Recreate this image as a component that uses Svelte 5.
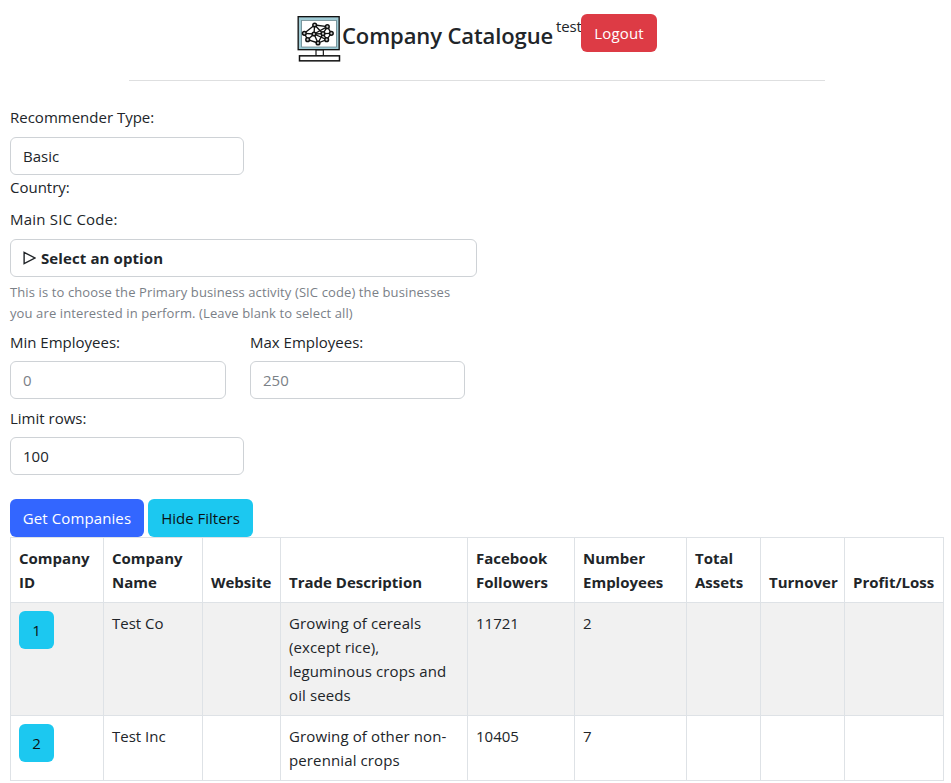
<script>
  const columns = [
    { label: 'Company ID', width: 93 },
    { label: 'Company Name', width: 99 },
    { label: 'Website', width: 78 },
    { label: 'Trade Description', width: 187 },
    { label: 'Facebook Followers', width: 107 },
    { label: 'Number Employees', width: 112 },
    { label: 'Total Assets', width: 74 },
    { label: 'Turnover', width: 84 },
    { label: 'Profit/Loss', width: 99 }
  ];
  const companies = [
    { id: 1, name: 'Test Co', trade: ['Growing of cereals', '(except rice),', 'leguminous crops and', 'oil seeds'], followers: 11721, employees: 2 },
    { id: 2, name: 'Test Inc', trade: ['Growing of other non-', 'perennial crops'], followers: 10405, employees: 7 }
  ];
  const nodes = [[89, 60], [127, 65], [58, 85], [87, 87], [114, 86], [139, 85], [68, 104], [99, 114], [125, 104]];
  const edges = [[0, 1], [0, 2], [0, 3], [0, 4], [1, 4], [1, 5], [2, 3], [2, 6], [3, 6], [3, 4], [3, 7], [4, 5], [4, 7], [4, 8], [5, 8], [6, 7], [7, 8], [3, 8], [1, 3]];
</script>

<header>
  <svg class="logo" viewBox="36 30 132 144" aria-hidden="true">
    <rect x="39.500" y="35" width="123" height="99" fill="#9fcbd5" stroke="#111" stroke-width="4" />
    <rect x="50" y="46" width="104" height="80" fill="#fff" stroke="#55747c" stroke-width="2" />
    <rect x="93" y="135" width="22" height="17" fill="#fff" stroke="#111" stroke-width="3.500" />
    <rect x="43.500" y="152.500" width="120" height="15" fill="#fff" stroke="#111" stroke-width="4.500" />
    {#each edges as [a, b]}
      <line x1={nodes[a][0]} y1={nodes[a][1]} x2={nodes[b][0]} y2={nodes[b][1]} stroke="#111" stroke-width="4" />
    {/each}
    {#each nodes as [cx, cy]}
      <circle {cx} {cy} r="5.500" fill="#ccc" stroke="#111" stroke-width="4.500" />
    {/each}
  </svg>
  <h1>Company Catalogue</h1>
  <span class="user">test</span>
  <button class="btn logout">Logout</button>
</header>
<hr />

<main>
  <form>
    <label for="kind">Recommender Type:</label>
    <div class="control narrow" id="kind">Basic</div>
    <div class="label">Country:</div>
    <div class="label sic">Main SIC Code:</div>
    <div class="control wide">
      <svg class="caret" viewBox="0 0 12 13" aria-hidden="true"><path d="M1 1.200 11 6.500 1 11.800Z" fill="none" stroke="#212529" stroke-width="1.300" /></svg>
      <b>Select an option</b>
    </div>
    <p class="help">This is to choose the Primary business activity (SIC code) the businesses<br />you are interested in perform. (Leave blank to select all)</p>
    <div class="pair">
      <div class="field">
        <label for="min">Min Employees:</label>
        <input id="min" class="control" placeholder="0" />
      </div>
      <div class="field">
        <label for="max">Max Employees:</label>
        <input id="max" class="control" placeholder="250" />
      </div>
    </div>
    <label class="limit" for="limit">Limit rows:</label>
    <input id="limit" class="control narrow" value="100" />
    <div class="actions">
      <button type="button" class="btn get">Get Companies</button>
      <button type="button" class="btn hide">Hide Filters</button>
    </div>
  </form>

  <table>
    <colgroup>
      {#each columns as c}<col style="width:{c.width}px" />{/each}
    </colgroup>
    <thead>
      <tr>{#each columns as c}<th>{c.label}</th>{/each}</tr>
    </thead>
    <tbody>
      {#each companies as c}
        <tr>
          <td><button class="btn id">{c.id}</button></td>
          <td>{c.name}</td>
          <td></td>
          <td class="trade">{#each c.trade as line}<div>{line}</div>{/each}</td>
          <td>{c.followers}</td>
          <td>{c.employees}</td>
          <td></td><td></td><td></td>
        </tr>
      {/each}
    </tbody>
  </table>
</main>

<style>
  :global(body) { background: #fff; overflow: hidden; }
  :global(#app) { font: 400 15px/24px "Open Sans", "Noto Sans", sans-serif; color: #212529; }
  * { box-sizing: border-box; }
  header { display: flex; align-items: flex-start; padding: 14px 0 0 297px; height: 80px; }
  .logo { width: 44px; height: 48px; margin-top: 1px; flex: none; }
  h1 { margin: 7px 0 0 1px; width: 213px; font-size: 22px; line-height: 29px; font-weight: 600; letter-spacing: -0.1px; white-space: nowrap; }
  .user { width: 26px; padding-left: 1px; letter-spacing: -0.1px; }
  .btn { display: flex; align-items: center; justify-content: center; height: 38px; padding: 0; border: 0; border-radius: 6px; font: inherit; letter-spacing: inherit; white-space: nowrap; }
  .logout { width: 76px; background: #dd3b45; color: #fff; letter-spacing: 0.15px; }
  hr { width: 696px; height: 1px; margin: 0 0 0 129px; border: 0; background: #dedfe0; }
  main { padding: 24px 0 0 10px; }
  label, .label { display: block; height: 24px; margin-bottom: 8px; white-space: nowrap; }
  .sic { letter-spacing: 0.22px; }
  .control { display: flex; align-items: center; width: 100%; height: 38px; padding: 0 12px; border: 1px solid #ced2d6; border-radius: 6px; background: #fff; font: inherit; color: inherit; letter-spacing: inherit; outline: none; }
  .control::placeholder { color: #7b8187; opacity: 1; }
  .narrow { width: 234px; }
  .wide { width: 467px; }
  .caret { width: 13px; height: 14px; margin-right: 5px; }
  .wide b { letter-spacing: 0.1px; }
  .help { margin: 5px 0 0; height: 48px; font-size: 13px; line-height: 21px; letter-spacing: 0.11px; color: #7a8087; white-space: nowrap; }
  .pair { display: flex; gap: 24px; margin-bottom: 7px; }
  .pair label, .limit { margin-bottom: 7px; }
  .field:first-child { width: 216px; }
  .field:last-child { width: 215px; }
  .actions { display: flex; gap: 4px; margin-top: 24px; }
  .get { width: 134px; background: #3366ff; color: #fff; letter-spacing: 0.1px; }
  .hide { width: 105px; background: #1cc8f0; color: #0b1214; }
  table { width: 934px; table-layout: fixed; border-collapse: collapse; }
  th, td { padding: 8px; border: 1px solid #dee2e6; text-align: left; vertical-align: top; }
  th { font-weight: 700; vertical-align: bottom; }
  tbody tr:first-child { background: #f1f1f1; }
  .trade { white-space: nowrap; letter-spacing: 0.12px; }
  .id { width: 35px; background: #1cc8f0; color: #0b1214; }
</style>
